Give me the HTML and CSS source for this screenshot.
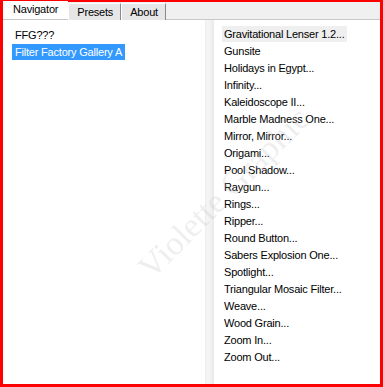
FILE: index.html
```html
<!DOCTYPE html>
<html>
<head>
<meta charset="utf-8">
<link rel="stylesheet" href="styles.css">
</head>
<body>
<div class="frame">
  <div class="tabs">
    <div class="tab active">Navigator</div>
    <div class="tab">Presets</div>
    <div class="tab">About</div>
    <div class="tab-fill"></div>
  </div>
  <div class="panes">
    <div class="left">
      <div class="row">FFG???</div>
      <div class="row"><span class="sel">Filter Factory Gallery A</span></div>
    </div>
    <div class="splitter"></div>
    <div class="right">
      <div class="row"><span class="hot">Gravitational Lenser 1.2...</span></div>
      <div class="row">Gunsite</div>
      <div class="row">Holidays in Egypt...</div>
      <div class="row">Infinity...</div>
      <div class="row">Kaleidoscope II...</div>
      <div class="row">Marble Madness One...</div>
      <div class="row">Mirror, Mirror...</div>
      <div class="row">Origami...</div>
      <div class="row">Pool Shadow...</div>
      <div class="row">Raygun...</div>
      <div class="row">Rings...</div>
      <div class="row">Ripper...</div>
      <div class="row">Round Button...</div>
      <div class="row">Sabers Explosion One...</div>
      <div class="row">Spotlight...</div>
      <div class="row">Triangular Mosaic Filter...</div>
      <div class="row">Weave...</div>
      <div class="row">Wood Grain...</div>
      <div class="row">Zoom In...</div>
      <div class="row">Zoom Out...</div>
    </div>
    <div class="watermark">Violette Graphic</div>
  </div>
</div>
</body>
</html>
```

FILE: styles.css
```css
html, body {
  margin: 0;
  padding: 0;
  background: #ffffff;
}
.frame {
  width: 383px;
  height: 387px;
  box-sizing: border-box;
  border: 3px solid #ff0000;
  border-top-width: 2px;
  display: flex;
  flex-direction: column;
  font-family: "Liberation Sans", Arial, sans-serif;
  font-size: 11px;
  letter-spacing: -0.2px;
  color: #000;
  background: #fff;
}
.tabs {
  display: flex;
  height: 18px;
  flex: none;
  background: #f0f0f0;
  border-bottom: 1px solid #c8c8c8;
  box-sizing: border-box;
}
.tab {
  height: 16px;
  margin-top: 1px;
  padding: 0 7px 0 8px;
  line-height: 16px;
  background: #e6e6e6;
  border-left: 1px solid #ffffff;
  border-right: 1px solid #8a8a8a;
  border-top: 1px solid #ffffff;
}
.tab.active {
  background: #ffffff;
  height: 18px;
  margin-top: -1px;
  padding: 0 10px 0 10px;
  border: none;
  line-height: 17px;
}
.tab-fill {
  flex: 1;
}
.panes {
  flex: 1;
  display: flex;
  position: relative;
  overflow: hidden;
}
.left {
  width: 202px;
  padding-top: 7px;
  padding-left: 9px;
  box-sizing: border-box;
}
.splitter {
  width: 9px;
  background: linear-gradient(to right, #ededed 0, #f6f6f6 30%, #f0f0f0 70%, #e8e8e8 100%);
}
.right {
  flex: 1;
  padding-top: 6px;
  padding-left: 8px;
}
.row {
  height: 17px;
  line-height: 17px;
  white-space: nowrap;
}
.left .row {
  padding-left: 3px;
}
.sel {
  display: inline-block;
  background: #3399ff;
  color: #ffffff;
  padding: 0 3px;
  margin-left: -3px;
  line-height: 16px;
}
.hot {
  display: inline-block;
  background: #efefef;
  padding: 0 2px;
  line-height: 16px;
}
.right .row {
  padding-left: 2px;
}
.right .row .hot {
  margin-left: -2px;
}
.watermark {
  position: absolute;
  left: 108px;
  top: 154px;
  font-family: "Liberation Serif", serif;
  font-size: 34px;
  letter-spacing: 0;
  color: rgba(180, 180, 180, 0.22);
  transform: rotate(-45deg);
  white-space: nowrap;
  pointer-events: none;
}
```
